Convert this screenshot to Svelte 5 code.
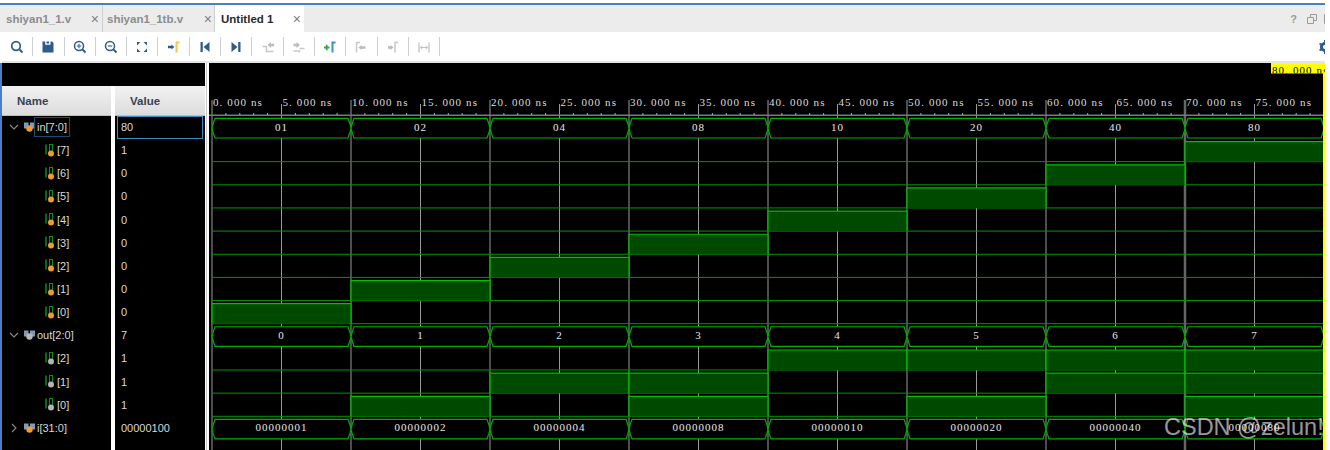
<script>
  const X0 = 212, PX = 13.9, PITCH = 23.15, TOP = 116;
  const xAt = (ns) => X0 + ns * PX;
  const rowTop = (i) => TOP + i * PITCH;

  const rows = [
    { name: 'in[7:0]', value: '80', kind: 'bus', tree: 'open', dot: 'in', segs: ['01','02','04','08','10','20','40','80'], selected: true },
    { name: '[7]', value: '1', kind: 'bit', dot: 'in', hi: [7] },
    { name: '[6]', value: '0', kind: 'bit', dot: 'in', hi: [6] },
    { name: '[5]', value: '0', kind: 'bit', dot: 'in', hi: [5] },
    { name: '[4]', value: '0', kind: 'bit', dot: 'in', hi: [4] },
    { name: '[3]', value: '0', kind: 'bit', dot: 'in', hi: [3] },
    { name: '[2]', value: '0', kind: 'bit', dot: 'in', hi: [2] },
    { name: '[1]', value: '0', kind: 'bit', dot: 'in', hi: [1] },
    { name: '[0]', value: '0', kind: 'bit', dot: 'in', hi: [0] },
    { name: 'out[2:0]', value: '7', kind: 'bus', tree: 'open', dot: 'out', segs: ['0','1','2','3','4','5','6','7'] },
    { name: '[2]', value: '1', kind: 'bit', dot: 'out', hi: [4,5,6,7] },
    { name: '[1]', value: '1', kind: 'bit', dot: 'out', hi: [2,3,6,7] },
    { name: '[0]', value: '1', kind: 'bit', dot: 'out', hi: [1,3,5,7] },
    { name: 'i[31:0]', value: '00000100', kind: 'bus', tree: 'closed', dot: 'in', segs: ['00000001','00000002','00000004','00000008','00000010','00000020','00000040','00000080'] },
  ];

  const labels = Array.from({ length: 16 }, (_, i) => i * 5);
  const ticks = Array.from({ length: 81 }, (_, i) => i).filter((n) => n % 5 !== 0);

  function busPath(a, t) {
    const l = xAt(a * 10), r = xAt((a + 1) * 10);
    const y1 = t + 2.4, y2 = t + 22, m = (y1 + y2) / 2;
    return `M${l} ${m}L${l + 1} ${m - 4}L${l + 3} ${y1}H${r - 3}L${r - 1} ${m - 4}L${r} ${m}L${r - 1} ${m + 4}L${r - 3} ${y2}H${l + 3}L${l + 1} ${m + 4}Z`;
  }

  const tools = [
    'search','save','zoomin','zoomout','fit','cursor','first','last','prevt','nextt','add','prevm','nextm','swap'
  ];
</script>

{#snippet busIcon(dot)}
  <svg class="sig" width="11" height="12" viewBox="0 0 11 12">
    <path d="M0 1.500h4.500v6H0zM6 1.500h5v6H6z" fill="#7f9ab5" />
    <circle cx="5.500" cy="7.500" r="3.200" fill={dot === 'in' ? '#f09a30' : '#b8b8b8'} />
  </svg>
{/snippet}

{#snippet bitIcon(dot)}
  <svg class="sig" width="10" height="15" viewBox="0 0 10 15">
    <path d="M2 1.500v10" stroke="#0f8a2a" stroke-width="1.500" fill="none" />
    <path d="M5.500 8V1.500h3V8" stroke="#0f8a2a" stroke-width="1.100" fill="none" />
    <circle cx="7" cy="10.500" r="3" fill={dot === 'in' ? '#f09a30' : '#b4b4b4'} />
  </svg>
{/snippet}

<div class="frame">
  <div class="tabs">
    <div class="tab t1"><span>shiyan1_1.v</span><i>×</i></div>
    <div class="tab t2"><span>shiyan1_1tb.v</span><i>×</i></div>
    <div class="tab t3 on"><span>Untitled 1</span><i>×</i></div>
    <div class="winbtns">
      <b>?</b>
      <svg width="10" height="10" viewBox="0 0 10 10"><path d="M3.500 3V.500h6v6H7M.500 3.500h6v6h-6z" fill="none" stroke="#9a9a9a"/></svg>
      <svg class="maxb" width="10" height="10" viewBox="0 0 10 10"><path d="M.500.500h9v9h-9z" fill="none" stroke="#9a9a9a"/></svg>
    </div>
  </div>

  <div class="toolbar">
    {#each tools as t}
      <div class="tool">
        <svg width="16" height="16" viewBox="0 0 16 16">
          {#if t === 'search'}
            <circle cx="7" cy="7" r="4.300" fill="none" stroke="#2f5a8c" stroke-width="1.700"/><path d="M10.500 10.500l3 3" stroke="#2f5a8c" stroke-width="2"/>
          {:else if t === 'save'}
            <path d="M2.500 2.500h2.700v3.300h5.300V2.500h1.500l1.500 1.500v9.500H2.500z" fill="#2f5a8c"/><path d="M6.500 2.500h2.500v2H6.500z" fill="#2f5a8c"/>
          {:else if t === 'zoomin' || t === 'zoomout'}
            <circle cx="7" cy="7" r="4.500" fill="none" stroke="#2f5a8c" stroke-width="1.500"/><path d="M10.500 10.500l3 3" stroke="#2f5a8c" stroke-width="2"/><path d="M4.800 7h4.400" stroke="#5a7fa8" stroke-width="1.400"/>
            {#if t === 'zoomin'}<path d="M7 4.800v4.400" stroke="#5a7fa8" stroke-width="1.400"/>{/if}
          {:else if t === 'fit'}
            <path d="M3 3h3.500L3 6.500zM13 3v3.500L9.500 3zM3 13V9.500L6.500 13zM13 13H9.500L13 9.500z" fill="#2f5a8c"/>
          {:else if t === 'cursor'}
            <path d="M2 6.800h3.500V5.500l2.800 2.500-2.800 2.500V9.300H2z" fill="#2f5a8c"/><path d="M13.500 3.500h-3v10" fill="none" stroke="#f0c850" stroke-width="2"/>
          {:else if t === 'first'}
            <path d="M3.500 3h2.300v10H3.500zM12.500 3v10L6.500 8z" fill="#2f5a8c"/>
          {:else if t === 'last'}
            <path d="M12.500 3h-2.300v10h2.300zM3.500 3v10L9.500 8z" fill="#2f5a8c"/>
          {:else if t === 'prevt'}
            <path d="M2.500 7.500h4v5h7" fill="none" stroke="#c8c8c8" stroke-width="1.500"/><path d="M7.500 6l3.500-3v1.800h3V7.200h-3V9z" fill="#bcbcbc"/>
          {:else if t === 'nextt'}
            <path d="M2.500 12h6v1.500M8.500 9.500h5" fill="none" stroke="#c8c8c8" stroke-width="1.500"/><path d="M2.500 4.800h3V3L9 6 5.500 9V7.200h-3z" fill="#bcbcbc"/>
          {:else if t === 'add'}
            <path d="M2 8.500h5.500M4.700 5.700v5.600" stroke="#35a84a" stroke-width="1.800"/><path d="M13.500 3.500h-3v10" fill="none" stroke="#3f8fc4" stroke-width="2"/>
          {:else if t === 'prevm'}
            <path d="M7 3.500H3.500v10" fill="none" stroke="#c8c8c8" stroke-width="1.500"/><path d="M5.500 8.500l3-2.500v1.300h4v2.400h-4V11z" fill="#bcbcbc"/>
          {:else if t === 'nextm'}
            <path d="M13 3.500H10v10" fill="none" stroke="#c8c8c8" stroke-width="1.500"/><path d="M3 7.300h2.500V6l3 2.500-3 2.500V9.700H3z" fill="#bcbcbc"/>
          {:else}
            <path d="M3 3.500v10M13 3.500v10" stroke="#c8c8c8" stroke-width="1.400"/><path d="M4.500 8.500h7M6.300 6.700l-1.800 1.800 1.800 1.800M9.700 6.700l1.800 1.800-1.800 1.800" fill="none" stroke="#c0c0c0"/>
          {/if}
        </svg>
      </div>
    {/each}
    <svg class="gear" width="12" height="14" viewBox="0 0 12 14"><circle cx="6" cy="7" r="3.600" fill="none" stroke="#2f5a8c" stroke-width="3"/><path d="M6 0v3M6 11v3M.500 3.500l2.500 1.500M9 9l2.500 1.500M.500 10.500L3 9M9 5l2.500-1.500" stroke="#2f5a8c" stroke-width="2"/></svg>
  </div>

  <div class="panes">
    <div class="left">
      <div class="spacer"></div>
      <div class="cols">
        <div class="col namecol">
          <div class="head">Name</div>
          {#each rows as r}
            <div class="row" class:child={r.kind === 'bit'}>
              {#if r.kind === 'bus'}
                <svg class="chev" width="10" height="10" viewBox="0 0 10 10">
                  {#if r.tree === 'open'}
                    <path d="M1 3l4 4 4-4" fill="none" stroke="#8a8a8a" stroke-width="1.100"/>
                  {:else}
                    <path d="M3 1l4 4-4 4" fill="none" stroke="#8a8a8a" stroke-width="1.100"/>
                  {/if}
                </svg>
                {@render busIcon(r.dot)}
              {:else}
                {@render bitIcon(r.dot)}
              {/if}
              <span class="label" class:sel={r.selected}>{r.name}</span>
            </div>
          {/each}
        </div>
        <div class="col valcol">
          <div class="head">Value</div>
          {#each rows as r}
            <div class="row val" class:sel={r.selected}><span>{r.value}</span></div>
          {/each}
        </div>
      </div>
    </div>

    <div class="gutter"></div>

    <svg class="wave" width="1116" height="387" viewBox="209 63 1116 387">
      <rect x="209" y="63" width="1116" height="387" fill="#000"/>

      {#each labels as n}
        <line x1={xAt(n)} x2={xAt(n)} y1={n % 10 === 0 ? 100 : 104} y2="450" stroke={n === 70 ? '#666' : '#9a9a9a'} stroke-width={n === 70 ? 2.500 : 1}/>
        <text class="rul" x={xAt(n) + 1} y="105.500">{n}. 000 ns</text>
      {/each}
      <rect x="209" y="114.500" width="1116" height="1.500" fill="#7a7a7a"/>
      {#each ticks as n}
        <line x1={xAt(n)} x2={xAt(n)} y1="113" y2="115" stroke="#b0b0b0"/>
      {/each}

      {#each rows as r, i}
        {@const t = rowTop(i)}
        {#if r.kind === 'bit'}
          <line x1={X0} x2={xAt(80)} y1={t + 22.500} y2={t + 22.500} stroke="#009800"/>
          {#each r.hi as h}
            <rect x={xAt(h * 10)} y={t + 2.500} width={PX * 10} height="20" fill="#004a00" />
            <path d={`M${xAt(h * 10)} ${t + 22.500}V${t + 2.500}H${xAt(h * 10 + 10)}V${t + 22.500}`} fill="none" stroke="#00c000" stroke-width="1.200"/>
          {/each}
        {:else}
          {#each r.segs as s, k}
            <path d={busPath(k, t)} fill="#000" stroke="#00b000" stroke-width="1.200"/>
            <text class="bus" x={xAt(k * 10 + 5)} y={t + 14.500}>{s}</text>
          {/each}
        {/if}
      {/each}

      <rect x="1271" y="63" width="54" height="10.500" fill="#ffff00"/>
      <clipPath id="tagclip"><rect x="1271" y="63" width="54" height="10.500"/></clipPath>
      <g clip-path="url(#tagclip)"><text class="rul tag" x="1272" y="73.500">80. 000 ns</text></g>
      <rect x="1323" y="73" width="2" height="377" fill="#ffff00"/>
    </svg>
  </div>

  <div class="mark">CSDN @zelun!</div>
</div>

<style>
  :global(body) { margin: 0; background: #fff; }
  .frame {
    position: relative;
    width: 1325px;
    height: 450px;
    box-sizing: border-box;
    padding-top: 3px;
    overflow: hidden;
    display: flex;
    flex-direction: column;
    font-family: "Liberation Sans", Arial, sans-serif;
    background: #fff;
  }
  .tabs {
    height: 27px;
    flex: none;
    border-top: 2px solid #4a7fc8;
    display: flex;
    background: #ececec;
    padding-left: 2px;
  }
  .tab {
    display: flex;
    align-items: center;
    font-size: 11.500px;
    font-weight: 700;
    color: #8c8c8c;
    padding-left: 4px;
    box-sizing: border-box;
    border-right: 1px solid #cfcfcf;
    position: relative;
  }
  .t1 { width: 101px; }
  .t2 { width: 112px; }
  .t3 { width: 89px; border: 0; background: #fff; color: #2a2a2a; padding-left: 6px; }
  .tab i {
    position: absolute;
    right: 3px;
    top: 6px;
    font-style: normal;
    font-weight: 400;
    font-size: 14px;
    color: #808080;
  }
  .t2 i { right: 2px; }
  .winbtns {
    margin-left: auto;
    display: flex;
    align-items: center;
    gap: 7px;
    margin-right: -9px;
  }
  .winbtns b { font-size: 11px; color: #9a9a9a; font-weight: 700; margin-right: 3px; }
  .toolbar {
    height: 29px;
    flex: none;
    margin-left: 2px;
    display: flex;
    align-items: center;
    border-bottom: 2px solid #e4e4e4;
  }
  .tool {
    width: 31.300px;
    height: 19px;
    flex: none;
    display: flex;
    align-items: center;
    justify-content: center;
    box-sizing: border-box;
    border-right: 1px solid #cfcfcf;
  }
  .gear { margin-left: auto; margin-right: -6px; flex: none; }
  .panes {
    flex: 1;
    display: flex;
    min-height: 0;
    border-left: 2px solid #4a7fc8;
  }
  .left { width: 203px; display: flex; flex-direction: column; flex: none; }
  .spacer { height: 23px; background: #000; flex: none; }
  .cols { flex: 1; display: flex; gap: 4px; background: #fff; }
  .col { background: #000; display: flex; flex-direction: column; color: #d8d8d8; font-size: 11px; }
  .namecol { width: 109px; }
  .valcol { width: 90px; }
  .head {
    height: 30px;
    flex: none;
    box-sizing: border-box;
    background: linear-gradient(#f2f2f2, #dcdcdc);
    border-bottom: 1px solid #bcbcbc;
    color: #3a4250;
    font-weight: 700;
    font-size: 11.500px;
    display: flex;
    align-items: center;
    padding-left: 15px;
  }
  .row {
    height: 23.150px;
    flex: none;
    display: flex;
    align-items: center;
    box-sizing: border-box;
    padding-left: 7px;
    padding-bottom: 1px;
  }
  .row.child { padding-left: 42px; }
  .chev { margin-right: 5px; flex: none; }
  .sig { flex: none; }
  .label { padding: 0 2px; margin-left: -1px; line-height: 18px; border: 1px solid transparent; }
  .row.child .label { margin-left: 0; }
  .label.sel { border-color: #174e70; }
  .val { padding-left: 6px; }
  .val.sel { margin: 0 2px; padding-left: 3px; border: 1px solid #3a8cc8; }
  .gutter {
    width: 4px;
    flex: none;
    background: linear-gradient(90deg, #fff 1px, #c8c8c8 1px, #c8c8c8 2px, #fff 2px);
  }
  .wave { display: block; flex: none; }
  .rul {
    font-family: "Liberation Serif", "Times New Roman", serif;
    font-size: 11px;
    letter-spacing: 1.100px;
    fill: #dcdcdc;
  }
  .tag { fill: #000; }
  .bus {
    font-family: "Liberation Serif", "Times New Roman", serif;
    font-size: 11px;
    letter-spacing: 1px;
    fill: #e8e8e8;
    text-anchor: middle;
  }
  .mark {
    position: absolute;
    left: 1164px;
    top: 412px;
    font-size: 23.500px;
    line-height: 30px;
    color: rgba(255, 255, 255, 0.6);
    white-space: nowrap;
    pointer-events: none;
  }
</style>
